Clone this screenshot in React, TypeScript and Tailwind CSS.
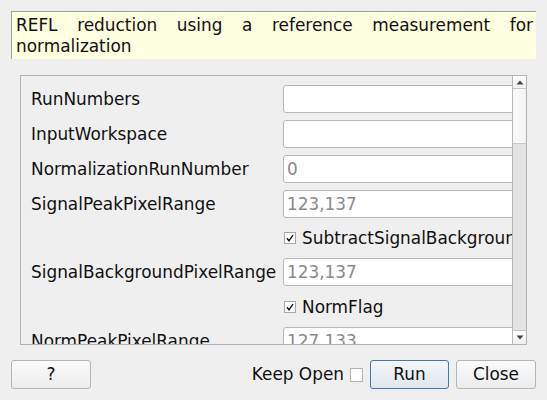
import React from "react";

const font = { fontFamily: '"DejaVu Sans", "Liberation Sans", sans-serif' };

function Check({ checked }: { checked: boolean }) {
  return (
    <div className="w-[12px] h-[12px] border border-[#a8a8a8] bg-white flex items-center justify-center shrink-0">
      {checked && (
        <svg width="10" height="10" viewBox="0 0 10 10">
          <path d="M2 5.2 L4 7.8 L8 2.2" fill="none" stroke="#111" strokeWidth="1.4" />
        </svg>
      )}
    </div>
  );
}

function InputRow({ label, placeholder }: { label: string; placeholder?: string }) {
  return (
    <div className="flex items-center h-[28px] shrink-0">
      <div className="w-[252px] shrink-0 text-[#111] whitespace-nowrap">{label}</div>
      <div className="w-[280px] shrink-0 h-[28px] bg-white border border-[#b8b8b8] rounded-[3px] flex items-center pl-[3px] text-[#8a8a8a]">
        {placeholder ?? ""}
      </div>
    </div>
  );
}

function CheckRow({ label, h }: { label: string; h: string }) {
  return (
    <div className={`flex items-center shrink-0 ${h}`}>
      <div className="w-[253px] shrink-0" />
      <Check checked />
      <div className="ml-[6px] whitespace-nowrap text-[#111]">{label}</div>
    </div>
  );
}

export default function App() {
  return (
    <div
      className="w-[547px] h-[400px] bg-[#efefef] flex flex-col pt-[11px] px-[11px] text-[16.9px] overflow-hidden"
      style={font}
    >
      <div className="h-[48px] bg-[#ffffe1] border-l border-t border-[#a0a0a0] pl-[4px] pr-[3px] pt-[3px] leading-[21px] text-justify text-[#111]">
        REFL reduction using a reference measurement for normalization
      </div>

      <div className="mt-[16px] mx-[9px] h-[270px] border border-[#b2b2b2] flex">
        <div className="flex-1 overflow-hidden">
          <div className="flex flex-col gap-[7px] pt-[9px] pl-[10px] leading-[20px]">
            <InputRow label="RunNumbers" />
            <InputRow label="InputWorkspace" />
            <InputRow label="NormalizationRunNumber" placeholder="0" />
            <InputRow label="SignalPeakPixelRange" placeholder="123,137" />
            <CheckRow label="SubtractSignalBackground" h="h-[26px]" />
            <InputRow label="SignalBackgroundPixelRange" placeholder="123,137" />
            <CheckRow label="NormFlag" h="h-[27px]" />
            <InputRow label="NormPeakPixelRange" placeholder="127,133" />
          </div>
        </div>
        <div className="w-[14px] border-l border-[#b8b8b8] flex flex-col">
          <div className="h-[13px] bg-gradient-to-b from-[#fdfdfd] to-[#f0f0f0] border-b border-[#c4c4c4] flex items-center justify-center">
            <svg width="8" height="5" viewBox="0 0 8 5">
              <path d="M0.5 4.5 L4 0.5 L7.5 4.5 Z" fill="#444" />
            </svg>
          </div>
          <div className="h-[55px] bg-gradient-to-r from-[#fbfbfb] to-[#f3f3f3] border-b border-[#c8c8c8]" />
          <div className="flex-1 bg-[#e3e3e3]" />
          <div className="h-[14px] bg-gradient-to-b from-[#fdfdfd] to-[#f0f0f0] border-t border-[#c4c4c4] flex items-center justify-center">
            <svg width="8" height="5" viewBox="0 0 8 5">
              <path d="M0.5 0.5 L4 4.5 L7.5 0.5 Z" fill="#444" />
            </svg>
          </div>
        </div>
      </div>

      <div className="mt-[15px] flex items-center h-[29px]">
        <button className="w-[80px] h-[29px] border border-[#b4b4b4] rounded-[3px] bg-gradient-to-b from-[#fbfbfb] to-[#ececec] text-[#111] leading-none">
          ?
        </button>
        <div className="flex-1" />
        <span className="text-[#111] whitespace-nowrap">Keep Open</span>
        <div className="ml-[6px] w-[13px] h-[14px] border border-[#b4b4b4] bg-white" />
        <button className="ml-[7px] w-[79px] h-[29px] border border-[#3e7ab8] rounded-[3px] bg-gradient-to-b from-[#f4f7fa] to-[#dfe6ed] text-[#111] leading-none">
          Run
        </button>
        <button className="ml-[7px] w-[80px] h-[29px] border border-[#b4b4b4] rounded-[3px] bg-gradient-to-b from-[#fbfbfb] to-[#ececec] text-[#111] leading-none">
          Close
        </button>
      </div>
    </div>
  );
}
